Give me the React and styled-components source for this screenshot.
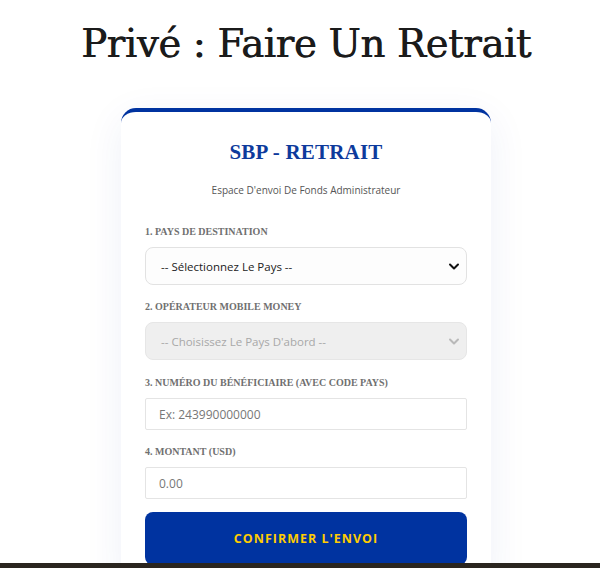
import React from 'react'
import styled, { createGlobalStyle } from 'styled-components'

const Global = createGlobalStyle`
	body {
		margin: 0;
		background: #fff;
		font-family: "Open Sans", "Noto Sans", sans-serif;
	}
`;

function Chevron({ muted }) {
	return (
		<svg width="12" height="12" viewBox="0 0 12 12" fill="none">
			<path d="M2 4.5L6 8.5l4-4" stroke={muted ? '#b9b9b9' : '#111'} strokeWidth="2" strokeLinecap="round" strokeLinejoin="round" />
		</svg>
	)
}

function App() {
	return (
		<Page>
			<Global />
			<Title>Privé : Faire Un Retrait</Title>
			<Card>
				<Heading>SBP - RETRAIT</Heading>
				<Sub>Espace D'envoi De Fonds Administrateur</Sub>
				<Form>
					<Group>
						<Label>1. Pays de destination</Label>
						<Select>
							<span>-- Sélectionnez Le Pays --</span>
							<Chevron />
						</Select>
					</Group>
					<Group gap={16}>
						<Label>2. Opérateur mobile money</Label>
						<Select disabled>
							<span>-- Choisissez Le Pays D'abord --</span>
							<Chevron muted />
						</Select>
					</Group>
					<Group>
						<Label>3. Numéro du bénéficiaire (avec code pays)</Label>
						<Input placeholder="Ex: 243990000000" />
					</Group>
					<Group gap={13}>
						<Label>4. Montant (USD)</Label>
						<Input placeholder="0.00" />
					</Group>
					<Button>CONFIRMER L'ENVOI</Button>
				</Form>
			</Card>
			<Footer />
		</Page>
	)
}

const Page = styled.div`
	display: flex;
	flex-direction: column;
	align-items: center;
	padding: 14px 0 60px 12px;
`;
const Title = styled.h1`
	margin: 0;
	font-family: "DejaVu Serif", "Liberation Serif", serif;
	font-weight: 400;
	font-size: 38.5px;
	line-height: 60px;
	color: #1b1b1b;
	letter-spacing: -0.3px;
	text-shadow: 0.7px 0 0 #1b1b1b;
`;
const Card = styled.div`
	margin-top: 34px;
	width: 370px;
	box-sizing: border-box;
	background: #fff;
	border-top: 4px solid #0033a0;
	border-radius: 15px;
	padding: 24px 24px 20px;
	box-shadow: 0 10px 40px rgba(0, 51, 160, 0.07);
`;
const Heading = styled.h2`
	margin: 2px 0 0;
	text-align: center;
	font-family: "Liberation Serif", serif;
	font-weight: 700;
	font-size: 21px;
	line-height: 28px;
	color: #0d3a9c;
	letter-spacing: 0.2px;
`;
const Sub = styled.p`
	margin: 16px 0 0;
	text-align: center;
	font-size: 10px;
	line-height: 16px;
	color: #555;
`;
const Form = styled.div`
	margin-top: 27px;
	display: flex;
	flex-direction: column;
`;
const Group = styled.div`
	display: flex;
	flex-direction: column;
	margin-bottom: ${p => p.gap || 15}px;
`;
const Label = styled.label`
	font-family: "Liberation Serif", serif;
	font-weight: 700;
	font-size: 10px;
	line-height: 14px;
	text-transform: uppercase;
	color: #707070;
	margin-bottom: 8px;
`;
const Select = styled.div`
	height: 38px;
	box-sizing: border-box;
	display: flex;
	align-items: center;
	justify-content: space-between;
	padding: 0 6px 0 15px;
	border: 1px solid ${p => p.disabled ? '#e6e6e6' : '#e2e2e2'};
	border-radius: 8px;
	background: ${p => p.disabled ? '#efefef' : '#fdfdfd'};
	font-size: 11.5px;
	color: ${p => p.disabled ? '#a8a8a8' : '#222'};
`;
const Input = styled.input`
	height: 32px;
	box-sizing: border-box;
	border: 1px solid #e4e4e4;
	border-radius: 2px;
	padding: 0 13px;
	font-family: "Open Sans", sans-serif;
	font-size: 12px;
	outline: none;
	&::placeholder {
		color: #777;
	}
`;
const Button = styled.button`
	height: 53px;
	border: none;
	border-radius: 8px;
	background: #0033a0;
	color: #ffcc00;
	font-family: "Open Sans", sans-serif;
	font-weight: 700;
	font-size: 12.5px;
	letter-spacing: 1px;
	cursor: pointer;
`;
const Footer = styled.div`
	position: fixed;
	left: 0;
	right: 0;
	bottom: 0;
	height: 5px;
	background: #2a251f;
`;

export default App
